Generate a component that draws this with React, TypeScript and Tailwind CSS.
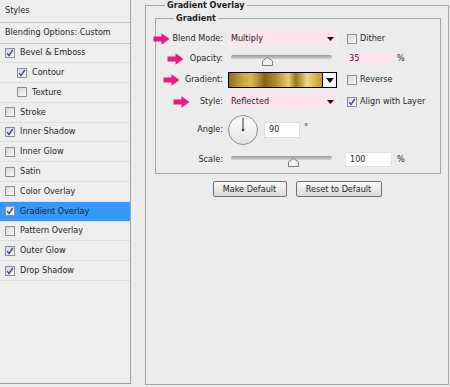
const styleRows = [
  { name: 'Bevel & Emboss', on: true },
  { name: 'Contour', on: true, sub: true },
  { name: 'Texture', sub: true },
  { name: 'Stroke' },
  { name: 'Inner Shadow', on: true },
  { name: 'Inner Glow' },
  { name: 'Satin' },
  { name: 'Color Overlay' },
  { name: 'Gradient Overlay', on: true, active: true },
  { name: 'Pattern Overlay' },
  { name: 'Outer Glow', on: true },
  { name: 'Drop Shadow', on: true },
];

function Box({ on }: { on?: boolean }) {
  return (
    <span className="flex h-[10px] w-[10px] shrink-0 items-center justify-center border border-[#8e8f8f] bg-linear-to-br from-[#d6d6d6] to-[#fbfbfb]">
      {on && (
        <svg width="8" height="8" viewBox="0 0 8 8">
          <path d="M1.2 4.2 L3 6.6 L6.8 1" fill="none" stroke="#2f4a9e" strokeWidth="1.4" />
        </svg>
      )}
    </span>
  );
}

function Arrow({ gap }: { gap: string }) {
  return (
    <svg width="17" height="12" viewBox="0 0 17 12" className={gap}>
      <path d="M0.5 3.6 H8.5 V0.3 L16.5 6 L8.5 11.7 V8.4 H0.5 Z" fill="#ec1a7e" />
    </svg>
  );
}

function Caret() {
  return (
    <svg width="7" height="4" viewBox="0 0 7 4">
      <path d="M0 0 H7 L3.5 4 Z" fill="#111" />
    </svg>
  );
}

function Thumb({ left }: { left: string }) {
  return (
    <svg width="11" height="9" viewBox="0 0 11 9" className={`absolute top-[6px] ${left}`}>
      <path d="M0.5 8.5 V4 L5.5 0.5 L10.5 4 V8.5 Z" fill="#f2f2f2" stroke="#7d7d7d" />
    </svg>
  );
}

function Track() {
  return <div className="absolute left-[3px] right-[5px] top-[4px] h-[4px] rounded-full bg-linear-to-b from-[#9a9a9a] to-[#d4d4d4]" />;
}

export default function App() {
  return (
    <div className="flex h-[387px] w-[450px] bg-[#ececec] font-['DejaVu_Sans_Condensed','DejaVu_Sans',sans-serif] text-[9px] text-[#1f1f1f]">
      <aside className="flex h-[384px] w-[131px] shrink-0 flex-col border-b border-r border-[#a0a0a0] bg-[#eeeeee]">
        <div className="flex h-[23px] shrink-0 items-center border-b border-[#c4c4c4] pl-[5px]">Styles</div>
        <div className="flex h-[20.5px] shrink-0 items-center border-b border-[#c4c4c4] pl-[5px]">Blending Options: Custom</div>
        {styleRows.map((row) => (
          <div
            key={row.name}
            className={`flex h-[19.8px] shrink-0 items-center gap-[5px] border-b border-[#dedede] ${row.sub ? 'pl-[17px]' : 'pl-[5px]'} ${row.active ? 'bg-[#3399ff]' : ''}`}
          >
            <Box on={row.on} />
            <span>{row.name}</span>
          </div>
        ))}
      </aside>

      <fieldset className="ml-[14px] h-[385px] w-[304px] border border-[#a5a5a5]">
        <legend className="ml-[19px] px-[2px] font-bold leading-[11px]">Gradient Overlay</legend>
        <fieldset className="ml-[9px] mr-[7px] mt-[1px] border border-[#a5a5a5] pb-[6px]">
          <legend className="ml-[18px] px-[2px] font-bold leading-[12px]">Gradient</legend>

          <div className="mt-[6px] flex h-[17px] items-center">
            <div className="flex w-[72px] items-center justify-end pr-[5px]">
              <Arrow gap="mr-[3px] shrink-0" />
              <span className="whitespace-nowrap">Blend Mode:</span>
            </div>
            <div className="flex h-full w-[109px] items-center justify-between border border-[#f6eef2] bg-[#fce3ee] pl-[2px] pr-[2px]">
              <span>Multiply</span>
              <Caret />
            </div>
            <div className="flex items-center gap-[3px] pl-[10px]">
              <Box />
              <span>Dither</span>
            </div>
          </div>

          <div className="mt-[4px] flex h-[15px] items-center">
            <div className="flex w-[72px] items-center justify-end pr-[5px]">
              <Arrow gap="mr-[6px] shrink-0" />
              <span>Opacity:</span>
            </div>
            <div className="relative h-full w-[109px]">
              <Track />
              <Thumb left="left-[34px]" />
            </div>
            <div className="ml-[8px] flex h-[12px] w-[47px] items-center bg-[#fce3ee] pl-[4px] text-[#3b1d2a]">35</div>
            <span className="ml-[5px]">%</span>
          </div>

          <div className="mt-[6px] flex h-[16px] items-center">
            <div className="flex w-[72px] items-center justify-end pr-[5px]">
              <Arrow gap="mr-[5px] shrink-0" />
              <span>Gradient:</span>
            </div>
            <div className="flex h-full w-[109px] border border-black">
              <div className="flex-1 bg-[linear-gradient(90deg,#8c6a1c_0%,#c9a53f_14%,#d9bb55_24%,#8a6416_38%,#b38c2c_50%,#e6cc6c_64%,#9a7520_72%,#f0da82_84%,#c29b2e_100%)]" />
              <div className="flex w-[14px] items-center justify-center border-l border-black bg-white">
                <svg width="8" height="5" viewBox="0 0 8 5">
                  <path d="M0 0 H8 L4 5 Z" fill="#111" />
                </svg>
              </div>
            </div>
            <div className="flex items-center gap-[3px] pl-[10px]">
              <Box />
              <span>Reverse</span>
            </div>
          </div>

          <div className="mt-[5px] flex h-[17px] items-center">
            <div className="flex w-[72px] items-center justify-end pr-[5px]">
              <Arrow gap="mr-[10px] shrink-0" />
              <span>Style:</span>
            </div>
            <div className="flex h-full w-[109px] items-center justify-between border border-[#f6eef2] bg-[#fce3ee] pl-[2px] pr-[2px]">
              <span>Reflected</span>
              <Caret />
            </div>
            <div className="flex items-center gap-[3px] pl-[10px]">
              <Box on />
              <span className="whitespace-nowrap">Align with Layer</span>
            </div>
          </div>

          <div className="mt-[5px] flex h-[30px] items-center">
            <div className="flex w-[72px] justify-end pr-[5px]">Angle:</div>
            <svg width="30" height="30" viewBox="0 0 30 30">
              <defs>
                <linearGradient id="dial" x1="0" y1="0" x2="0" y2="1">
                  <stop offset="0" stopColor="#fdfdfd" />
                  <stop offset="1" stopColor="#e2e2e2" />
                </linearGradient>
              </defs>
              <circle cx="15" cy="15" r="14.5" fill="url(#dial)" stroke="#8c8c8c" />
              <line x1="15" y1="15" x2="15" y2="2.5" stroke="#333" strokeWidth="1" />
              <circle cx="15" cy="15" r="1.3" fill="#333" />
            </svg>
            <div className="ml-[6px] flex h-[16px] w-[36px] items-center border border-[#dcdcdc] bg-white pl-[4px]">90</div>
            <span className="ml-[4px] -mt-[4px]">°</span>
          </div>

          <div className="mt-[7px] flex h-[15px] items-center">
            <div className="flex w-[72px] justify-end pr-[5px]">Scale:</div>
            <div className="relative h-full w-[109px]">
              <Track />
              <Thumb left="left-[60px]" />
            </div>
            <div className="ml-[8px] flex h-[15px] w-[47px] items-center border border-[#e2e2e2] bg-white pl-[4px]">100</div>
            <span className="ml-[5px]">%</span>
          </div>
        </fieldset>

        <div className="mt-[7px] flex justify-center gap-[9px]">
          <button className="h-[16px] w-[74px] rounded-[2px] border border-[#707070] bg-linear-to-b from-[#f7f7f7] to-[#dcdcdc] leading-none">
            Make Default
          </button>
          <button className="h-[16px] w-[86px] rounded-[2px] border border-[#707070] bg-linear-to-b from-[#f7f7f7] to-[#dcdcdc] leading-none">
            Reset to Default
          </button>
        </div>
      </fieldset>
    </div>
  );
}
